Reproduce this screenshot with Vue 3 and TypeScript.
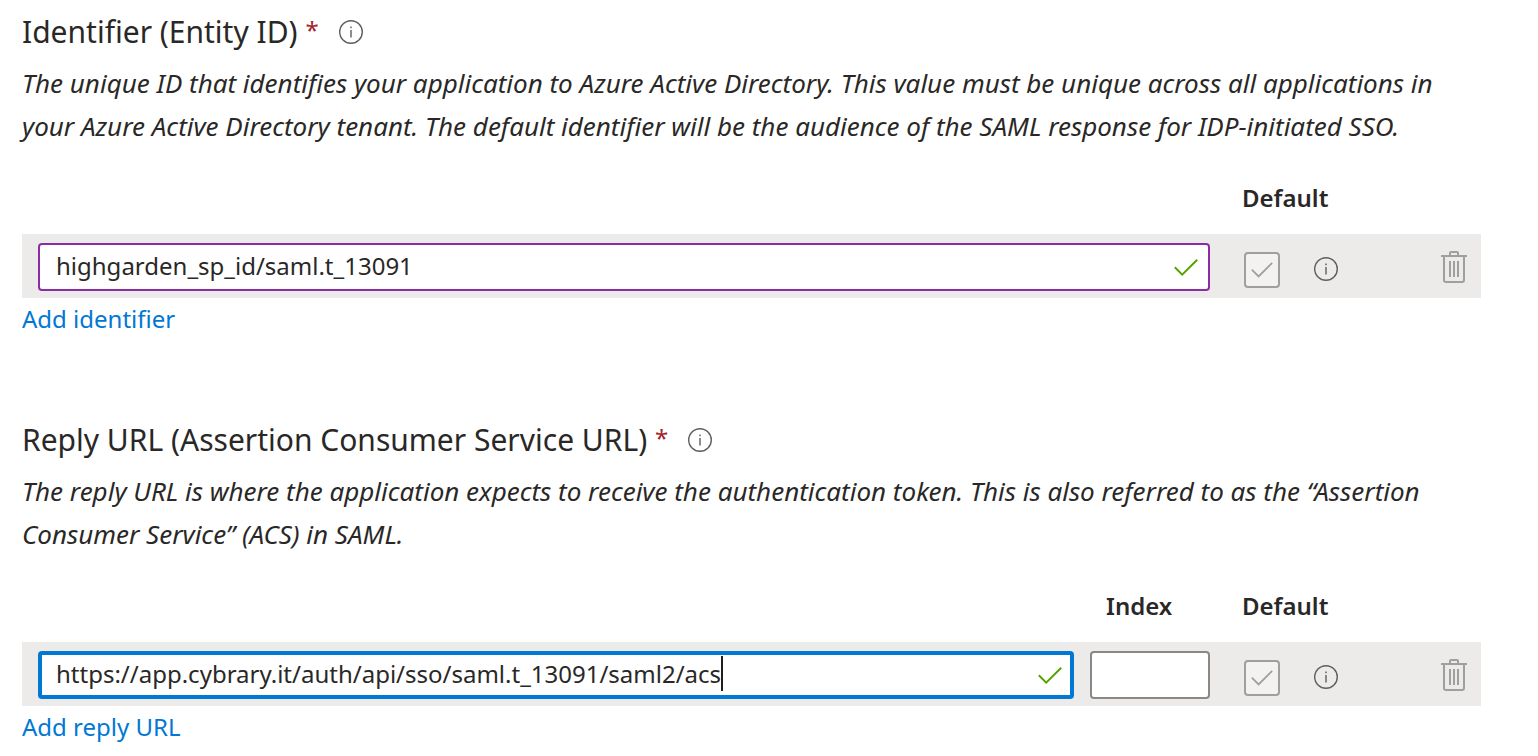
<script setup lang="ts">
import { nextTick, onMounted, reactive, ref } from 'vue'

interface UrlSection {
  id: string
  title: string
  description: string
  value: string
  index: string | null
  addLabel: string
  focused: boolean
}

const sections = reactive<UrlSection[]>([
  {
    id: 'identifier',
    title: 'Identifier (Entity ID)',
    description:
      'The unique ID that identifies your application to Azure Active Directory. This value must be unique across all applications in your Azure Active Directory tenant. The default identifier will be the audience of the SAML response for IDP-initiated SSO.',
    value: 'highgarden_sp_id/saml.t_13091',
    index: null,
    addLabel: 'Add identifier',
    focused: false,
  },
  {
    id: 'reply-url',
    title: 'Reply URL (Assertion Consumer Service URL)',
    description:
      'The reply URL is where the application expects to receive the authentication token. This is also referred to as the “Assertion Consumer Service” (ACS) in SAML.',
    value: 'https://app.cybrary.it/auth/api/sso/saml.t_13091/saml2/acs',
    index: '',
    addLabel: 'Add reply URL',
    focused: true,
  },
])

const root = ref<HTMLElement | null>(null)
const caretLeft = ref(0)

// The caret sits right after the last character of the focused field.
function placeCaret() {
  const input = root.value?.querySelector<HTMLInputElement>('.field.focused input')
  const context = document.createElement('canvas').getContext('2d')
  if (!input || !context) return
  const style = getComputedStyle(input)
  context.font = `${style.fontSize} ${style.fontFamily}`
  const start = parseInt(style.paddingLeft) + parseInt(style.borderLeftWidth)
  caretLeft.value = Math.round(start + context.measureText(input.value).width)
}

onMounted(async () => {
  await nextTick()
  placeCaret()
})
</script>

<template>
  <main ref="root" class="panel">
    <section v-for="s in sections" :key="s.id" class="section">
      <div class="heading">
        <h2 :id="s.id + '-title'">{{ s.title }} <span class="required">*</span></h2>
        <button type="button" class="icon-button" :aria-label="'About ' + s.title">
          <svg class="info" viewBox="0 0 24 24" aria-hidden="true">
            <circle cx="12" cy="12" r="11.3" />
            <path d="M12 10v7.5M12 6.5v1.8" />
          </svg>
        </button>
      </div>
      <p class="description">{{ s.description }}</p>

      <table class="urls">
        <colgroup>
          <col />
          <col v-if="s.index !== null" class="col-index" />
          <col class="col-default" />
          <col class="col-info" />
          <col class="col-delete" />
        </colgroup>
        <thead>
          <tr>
            <td></td>
            <th v-if="s.index !== null" scope="col" class="index-head">Index</th>
            <th scope="col" colspan="2">Default</th>
            <td></td>
          </tr>
        </thead>
        <tbody>
          <tr>
            <td class="value-cell">
              <div class="field" :class="{ focused: s.focused }">
                <input v-model="s.value" type="text" spellcheck="false" :aria-labelledby="s.id + '-title'" @input="placeCaret" />
                <span v-if="s.focused" class="caret" :style="{ left: caretLeft + 'px' }"></span>
                <svg class="valid" viewBox="0 0 24 17" aria-hidden="true">
                  <path d="M.8 8.2l7.4 7.4L23.2.8" />
                </svg>
              </div>
            </td>
            <td v-if="s.index !== null">
              <input v-model="s.index" class="index" type="text" aria-label="Index" />
            </td>
            <td>
              <label class="tick">
                <input type="checkbox" checked disabled aria-label="Default" />
                <svg viewBox="0 0 22 16" aria-hidden="true">
                  <path d="M.8 7.6l6.8 6.8L21.2.8" />
                </svg>
              </label>
            </td>
            <td>
              <button type="button" class="icon-button row-info" aria-label="About the default value">
                <svg class="info" viewBox="0 0 24 24" aria-hidden="true">
                  <circle cx="12" cy="12" r="11.3" />
                  <path d="M12 10v7.5M12 6.5v1.8" />
                </svg>
              </button>
            </td>
            <td>
              <button type="button" class="icon-button" aria-label="Delete" disabled>
                <svg class="trash" viewBox="0 0 26 32" aria-hidden="true">
                  <path d="M0 5h26M9 5V2q0-1 1-1h6q1 0 1 1v3M3 5v24q0 2 2 2h16q2 0 2-2V5" />
                  <path d="M9 10v16M13 10v16M17 10v16" />
                </svg>
              </button>
            </td>
          </tr>
        </tbody>
      </table>
      <a href="#" class="add" @click.prevent>{{ s.addLabel }}</a>
    </section>
  </main>
</template>

<style>
body {
  margin: 0;
  background: #fff;
}
</style>

<style scoped>
.panel {
  padding: 10px 57px 0 22px;
  color: #292827;
  font-family: "Noto Sans", "Open Sans", sans-serif;
  font-size: 24px;
}

.section + .section {
  margin-top: 78px;
}

.heading {
  display: flex;
  align-items: center;
  gap: 20px;
  height: 44px;
}

h2 {
  margin: 0;
  font-size: 30px;
  font-weight: 400;
  line-height: 44px;
}

.required {
  color: #a4262c;
  font-size: 24px;
  line-height: 24px;
  vertical-align: 4px;
}

.icon-button {
  display: block;
  padding: 0;
  border: 0;
  background: none;
}

svg {
  display: block;
  fill: none;
}

.info {
  width: 24px;
  height: 24px;
  stroke: #605e5c;
  stroke-width: 1.4;
}

.description {
  margin: 8px 0 28px;
  font-size: 26px;
  font-style: italic;
  line-height: 43px;
}

.urls {
  width: 100%;
  border-collapse: collapse;
  table-layout: fixed;
}

.col-index {
  width: 152px;
}

.col-default {
  width: 72px;
}

.col-info {
  width: 127px;
}

.col-delete {
  width: 40px;
}

th,
td {
  padding: 0;
  text-align: left;
}

th {
  height: 58px;
  font-weight: 600;
  line-height: 44px;
  vertical-align: top;
}

.index-head {
  padding-left: 16px;
}

tbody tr {
  height: 64px;
  background: #edebe9;
}

.value-cell {
  padding: 0 16px;
}

.value-cell:has(+ td .tick) {
  padding-right: 32px;
}

.field {
  position: relative;
}

input[type="text"] {
  display: block;
  box-sizing: border-box;
  width: 100%;
  height: 48px;
  margin: 2px 0 0;
  padding: 0 56px 4px 16px;
  border: 2px solid #8a2da5;
  border-radius: 4px;
  outline: 0;
  background: #fff;
  color: inherit;
  font: inherit;
}

.focused input[type="text"] {
  padding: 0 54px 4px 14px;
  border: 4px solid #0078d4;
}

input.index[type="text"] {
  width: 120px;
  padding: 0 14px;
  border-color: #8a8886;
}

.caret {
  position: absolute;
  top: 5px;
  width: 2px;
  height: 35px;
  background: #201f1e;
}

.valid {
  position: absolute;
  top: 16px;
  right: 12px;
  width: 24px;
  height: 17px;
  stroke: #57a300;
  stroke-width: 2;
}

.tick {
  display: grid;
  place-items: center;
  width: 36px;
  height: 36px;
  margin: 8px 0 0 2px;
}

.tick > * {
  grid-area: 1 / 1;
}

.tick input {
  box-sizing: border-box;
  width: 36px;
  height: 36px;
  margin: 0;
  border: 2px solid #a19f9d;
  border-radius: 4px;
  background: #f3f2f1;
  appearance: none;
}

.tick svg {
  z-index: 1;
  width: 22px;
  height: 16px;
  stroke: #a19f9d;
  stroke-width: 1.8;
}

.row-info {
  margin-top: 6px;
}

.trash {
  width: 26px;
  height: 32px;
  margin-top: 2px;
  stroke: #a19f9d;
  stroke-width: 2;
}

.add {
  display: block;
  width: fit-content;
  color: #0078d4;
  line-height: 42px;
  text-decoration: none;
}
</style>
